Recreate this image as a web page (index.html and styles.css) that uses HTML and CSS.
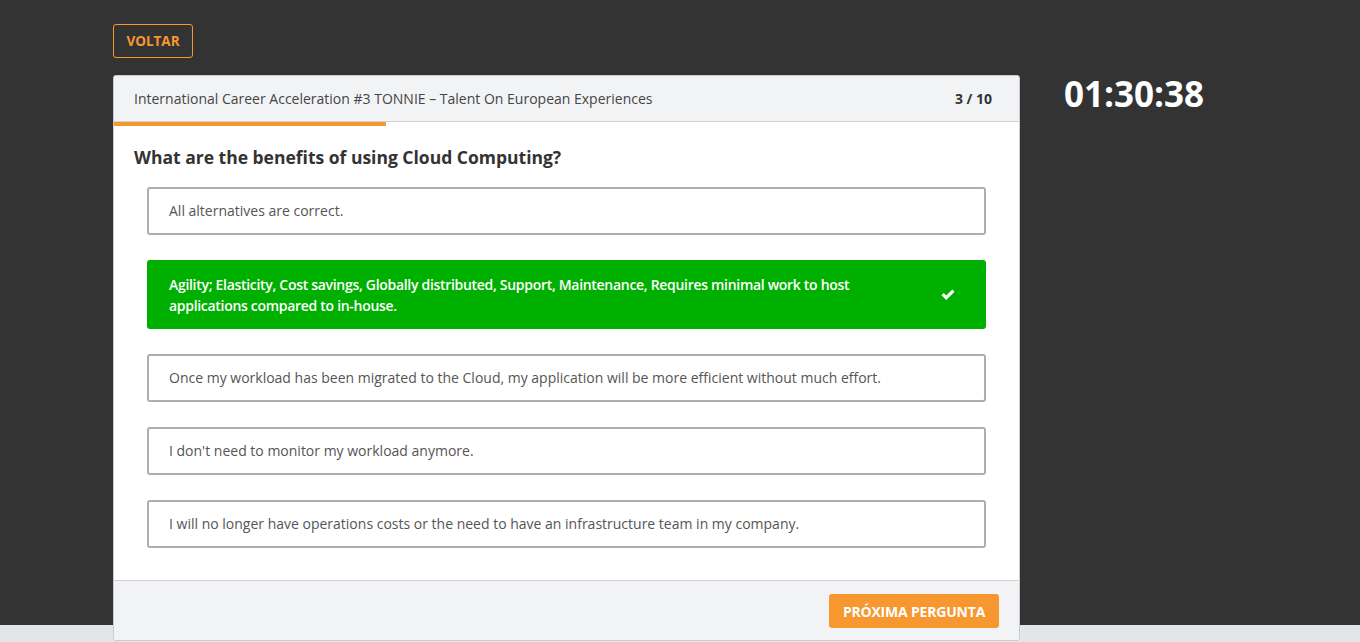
FILE: index.html
```html
<!DOCTYPE html>
<html lang="pt">
<head>
<meta charset="utf-8">
<title>Quiz</title>
<link rel="stylesheet" href="styles.css">
</head>
<body>
<div class="stage">
  <div class="wrap">
    <button class="back">VOLTAR</button>
    <div class="row">
      <div class="card">
        <div class="card-head">
          <span class="title">International Career Acceleration #3 TONNIE – Talent On European Experiences</span>
          <span class="count">3 / 10</span>
        </div>
        <div class="progress"><div class="progress-fill" style="width:30%"></div></div>
        <div class="card-body">
          <h2 class="question">What are the benefits of using Cloud Computing?</h2>
          <ul class="options">
            <li class="option">All alternatives are correct.</li>
            <li class="option selected">
              <span class="opt-text">Agility; Elasticity, Cost savings, Globally distributed, Support, Maintenance, Requires minimal work to host applications compared to in-house.</span>
              <svg class="check" viewBox="0 0 16 13" width="14" height="12"><path d="M0.5 6.8 L3.1 4.2 L6 7.1 L12.9 0.2 L15.5 2.8 L6 12.3 Z" fill="#fff"/></svg>
            </li>
            <li class="option">Once my workload has been migrated to the Cloud, my application will be more efficient without much effort.</li>
            <li class="option">I don't need to monitor my workload anymore.</li>
            <li class="option">I will no longer have operations costs or the need to have an infrastructure team in my company.</li>
          </ul>
        </div>
        <div class="card-foot">
          <button class="next">PRÓXIMA PERGUNTA</button>
        </div>
      </div>
      <div class="timer">01:30:38</div>
    </div>
  </div>
</div>
</body>
</html>
```

FILE: styles.css
```css
* { box-sizing: border-box; }
html, body { margin: 0; padding: 0; }
body {
  background: #e4e5e6;
  font-family: "Open Sans", "Liberation Sans", sans-serif;
  height: 642px;
  overflow: hidden;
}
.stage {
  background: #333333;
  height: 625px;
}
.wrap {
  padding: 24px 0 0 113px;
}
.back {
  display: block;
  width: 80px;
  height: 34px;
  background: transparent;
  border: 1px solid #f7972f;
  border-radius: 3px;
  color: #f7972f;
  font-family: inherit;
  font-weight: 700;
  font-size: 13.5px;
  padding: 0;
  margin: 0;
}
.row {
  display: flex;
  align-items: flex-start;
  margin-top: 17px;
}
.card {
  width: 907px;
  background: #fff;
  border: 1px solid #c9cbce;
  border-radius: 3px;
  overflow: hidden;
}
.card-head {
  height: 46px;
  background: #f2f3f5;
  border-bottom: 1px solid #d0d2d5;
  display: flex;
  align-items: center;
  justify-content: space-between;
  padding: 0 27px 0 20px;
  font-size: 14px;
  color: #454545;
}
.count { font-weight: 700; color: #333; font-size: 14px; }
.progress { height: 4px; background: #fff; }
.progress-fill { height: 4px; background: #f7972f; }
.card-body {
  padding: 19px 20px 32px 20px;
}
.question {
  margin: 0 0 17px 0;
  font-size: 17.5px;
  line-height: 25px;
  font-weight: 700;
  color: #333;
}
.options {
  list-style: none;
  margin: 0 13px;
  padding: 0;
  display: flex;
  flex-direction: column;
  gap: 25px;
}
.option {
  border: 2px solid #acaeb0;
  border-radius: 3px;
  padding: 12px 20px 12px 20px;
  font-size: 14px;
  line-height: 20px;
  color: #555;
}
.option.selected {
  background: #00b000;
  border-color: #00b000;
  color: #fff;
  font-weight: 600;
  display: flex;
  align-items: center;
  justify-content: space-between;
  padding: 12px 29px 11px 20px;
  line-height: 21px;
}
.opt-text { max-width: 720px; letter-spacing: -0.3px; }
.check { flex: none; }
.card-foot {
  background: #f2f3f5;
  border-top: 1px solid #d0d2d5;
  height: 60px;
  display: flex;
  justify-content: flex-end;
  align-items: flex-start;
  padding: 13px 20px 0 0;
}
.next {
  width: 170px;
  height: 34px;
  background: #f7972f;
  border: none;
  border-radius: 3px;
  color: #fff;
  font-family: inherit;
  font-weight: 700;
  font-size: 14px;
  padding: 0;
  letter-spacing: -0.2px;
}
.timer {
  margin-left: 44px;
  color: #fff;
  font-size: 35px;
  font-weight: 700;
  line-height: 38px;
}
```
